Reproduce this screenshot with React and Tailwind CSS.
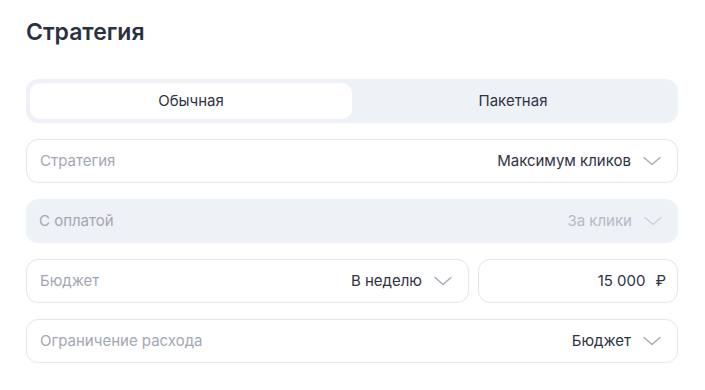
import React from "react";

const Chevron = ({ light }) => (
  <svg width="18" height="10" viewBox="0 0 18 10" fill="none" className="shrink-0">
    <path d="M1 1.5 L9 8.5 L17 1.5" stroke={light ? "#cdd0d9" : "#a6aab8"} strokeWidth="1.4" strokeLinecap="round" strokeLinejoin="round" />
  </svg>
);

const Field = ({ label, value, chevron = true, disabled = false, className = "" }) => (
  <div
    className={`flex items-center h-[44px] rounded-[12px] pl-[13px] pr-[16px] ${
      disabled ? "bg-[#eef1f6]" : "bg-white border border-[#e3e6ec]"
    } ${className}`}
  >
    <span className="text-[15px] text-[#a3a7b3]">{label}</span>
    <span className="flex-1" />
    {value && (
      <span className={`text-[15px] ${disabled ? "text-[#b6bac6]" : "text-[#2f3344]"}`}>{value}</span>
    )}
    {chevron && <span className="ml-[12px] flex items-center"><Chevron light={disabled} /></span>}
  </div>
);

export default function App() {
  return (
    <div className="w-[705px] h-[390px] bg-white px-[26px] pt-[18px]" style={{ fontFamily: "Inter, 'Noto Sans', sans-serif" }}>
      <h1 className="text-[23px] font-semibold text-[#2b3142] leading-[29px]">Стратегия</h1>
      <div className="mt-[32px] flex flex-col gap-[16px] w-[652px]">
        <div className="flex h-[44px] rounded-[12px] bg-[#eef1f6] p-[4px]">
          <div className="flex-1 flex items-center justify-center rounded-[10px] bg-white text-[15px] text-[#2f3344]">Обычная</div>
          <div className="flex-1 flex items-center justify-center text-[15px] text-[#2f3344]">Пакетная</div>
        </div>
        <Field label="Стратегия" value="Максимум кликов" />
        <Field label="С оплатой" value="За клики" disabled />
        <div className="flex gap-[9px]">
          <Field label="Бюджет" value="В неделю" className="w-[443px]" />
          <div className="flex-1 flex items-center justify-end h-[44px] rounded-[12px] bg-white border border-[#e3e6ec] pr-[11px]">
            <span className="text-[15px] text-[#2f3344]">15 000</span>
            <span className="ml-[10px] text-[15px] text-[#2f3344]">₽</span>
          </div>
        </div>
        <Field label="Ограничение расхода" value="Бюджет" />
      </div>
    </div>
  );
}
